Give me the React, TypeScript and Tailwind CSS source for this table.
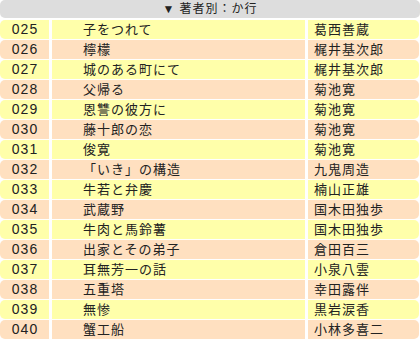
const rows: [string, string, string][] = [
  ['025', '子をつれて', '葛西善蔵'],
  ['026', '檸檬', '梶井基次郎'],
  ['027', '城のある町にて', '梶井基次郎'],
  ['028', '父帰る', '菊池寛'],
  ['029', '恩讐の彼方に', '菊池寛'],
  ['030', '藤十郎の恋', '菊池寛'],
  ['031', '俊寛', '菊池寛'],
  ['032', '「いき」の構造', '九鬼周造'],
  ['033', '牛若と弁慶', '楠山正雄'],
  ['034', '武蔵野', '国木田独歩'],
  ['035', '牛肉と馬鈴薯', '国木田独歩'],
  ['036', '出家とその弟子', '倉田百三'],
  ['037', '耳無芳一の話', '小泉八雲'],
  ['038', '五重塔', '幸田露伴'],
  ['039', '無惨', '黒岩涙香'],
  ['040', '蟹工船', '小林多喜二'],
];

export default function App() {
  return (
    <div
      className="w-[420px] h-[340px] bg-white text-[13px] text-[#222] tracking-[1px] overflow-hidden"
      style={{ fontFamily: '"Liberation Sans", "Noto Sans CJK JP", sans-serif' }}
    >
      {/* header */}
      <div className="h-[18px] mb-[2px] bg-[#dddddd] rounded-[5px] flex items-center justify-center text-[12px] leading-none">
        ▼ 著者別：か行
      </div>

      {rows.map(([no, title, author], i) => {
        const bg = i % 2 === 0 ? 'bg-[#ffffaa]' : 'bg-[#ffe0c0]';
        return (
          <div key={no} className="flex gap-[3px] h-[19px] mb-[1px] leading-[19px]">
            <div className={`w-[49px] text-center text-[14px] pl-[1px] rounded-l-[5px] ${bg}`}>{no}</div>
            <div className={`w-[253px] pl-[31px] ${bg}`}>{title}</div>
            <div className={`flex-1 pl-[6px] mr-[1px] rounded-r-[5px] ${bg}`}>{author}</div>
          </div>
        );
      })}
    </div>
  );
}
